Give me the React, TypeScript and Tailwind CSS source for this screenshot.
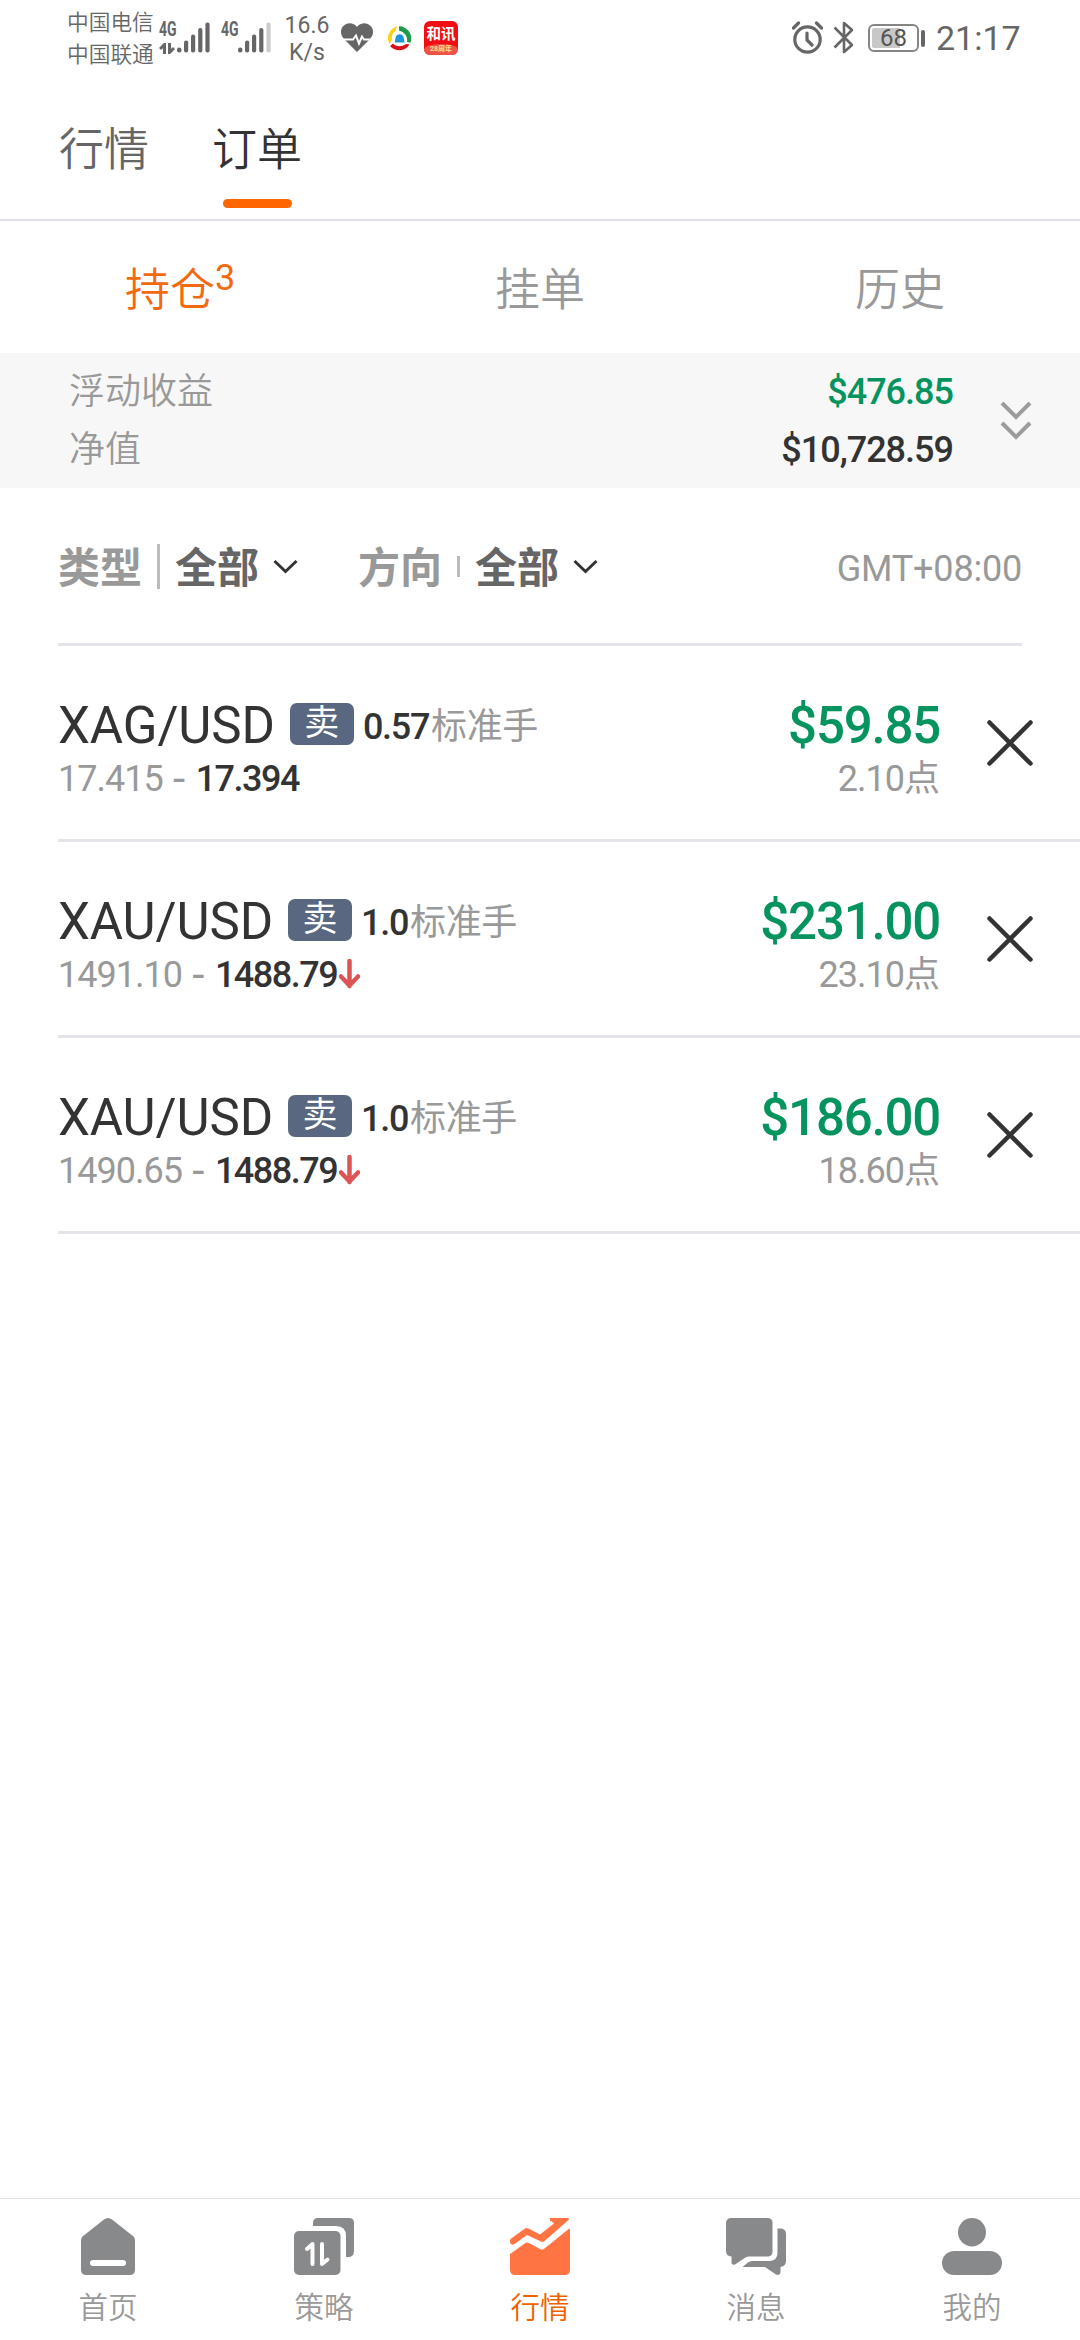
import React from "react";
import clsx from "clsx";

type Order = {
  id: number;
  symbol: string;
  lots: string;
  open: string;
  current: string;
  falling: boolean;
  profit: string;
  points: string;
};

const orders: Order[] = [
  { id: 1, symbol: "XAG/USD", lots: "0.57", open: "17.415", current: "17.394", falling: false, profit: "$59.85", points: "2.10" },
  { id: 2, symbol: "XAU/USD", lots: "1.0", open: "1491.10", current: "1488.79", falling: true, profit: "$231.00", points: "23.10" },
  { id: 3, symbol: "XAU/USD", lots: "1.0", open: "1490.65", current: "1488.79", falling: true, profit: "$186.00", points: "18.60" },
];

const Signal = ({ weak = false }: { weak?: boolean }) => (
  <svg width="33" height="32" viewBox="0 0 33 32" fill="#666">
    <rect x="0" y="26.5" width="4.4" height="5" rx="2" />
    <rect x="7" y="19.5" width="4.2" height="12" rx="2" />
    <rect x="14" y="13.5" width="4.2" height="18" rx="2" />
    <rect x="21.2" y="7" width="4.2" height="24.5" rx="2" />
    <rect x="28.4" y="1.5" width="4.2" height="30" rx="2" fill={weak ? "#ccc" : "#666"} />
  </svg>
);

const StatusBar = () => (
  <div className="flex h-[76px] shrink-0 items-start pl-[67px] pr-[60px] text-[#666]">
    <div className="mt-[7px] w-[88px] text-[21.7px] leading-[32px] font-[350] whitespace-nowrap">
      <div>中国电信</div>
      <div>中国联通</div>
    </div>
    <div className="mt-[20px] ml-[4px] flex h-[34px] w-[18px] flex-col justify-between">
      <span className="origin-left scale-x-70 text-[20px] leading-[19px] font-bold">4G</span>
      <svg width="16" height="11" viewBox="0 0 16 11" fill="none" stroke="#666" strokeWidth="3">
        <path d="M5.500 11V1.500L1 6M10.500 0v9.500L15 5" />
      </svg>
    </div>
    <div className="mt-[21px]">
      <Signal />
    </div>
    <span className="mt-[20px] ml-[11px] w-[17px] origin-left scale-x-70 text-[20px] leading-[19px] font-bold">4G</span>
    <div className="mt-[21px]">
      <Signal weak />
    </div>
    <div className="mt-[12px] ml-[13px] w-[46px] text-center text-[23px] leading-[27px]">
      <div>16.6</div>
      <div>K/s</div>
    </div>
    <svg className="mt-[23px] ml-[11px]" width="32" height="29" viewBox="0 0 32 29">
      <path d="M16 29 3 16C-1.500 11-.5 5 3 2.500c4-3.500 10-2.500 13 1.500 3-4 9-5 13-1.500 3.500 2.500 4.500 8.500 0 13.500z" fill="#666" />
      <path d="M2 16.500h10l3-4 3 8 3-7 2 3h7" fill="none" stroke="#fff" strokeWidth="2" />
    </svg>
    <svg className="mt-[26px] ml-[14px]" width="25" height="25" viewBox="0 0 25 25" fill="none">
      <path d="M2.500 18A12 12 0 0 1 10 .5L8.500 5A9 9 0 0 0 5 14z" fill="#fcd116" />
      <path d="M12 .3a12.200 12.200 0 0 1 11.500 16.500L20 16A10 10 0 0 0 12 4.500z" fill="#1f9a4a" />
      <path d="M22.500 18.500A12 12 0 0 1 3 20l3-2.500c3 3.500 9 3.500 13 .5z" fill="#d9131e" />
      <path d="M7.500 16.500c1-1 .3-2.500 1-4.500.8-5 7.500-5 8.300 0 .5 2 .2 3.500 1.200 4.500z" fill="#1b96d8" />
    </svg>
    <div className="mt-[21px] ml-[12px] flex h-[34px] w-[34px] flex-col items-center overflow-hidden rounded-[6px] bg-[#f20d12] text-white">
      <span className="mt-[6px] text-[14.500px] leading-[16px] font-bold">和讯</span>
      <span className="mt-[1px] h-[11px] w-full rounded-t-[50%] bg-[#ee5347] text-center text-[7px] leading-[11px] font-bold text-[#ffe28a]">
        28周年
      </span>
    </div>
    <div className="mt-[21px] ml-auto flex h-[34px] items-center">
      <svg className="mb-[2px]" width="31" height="33" viewBox="0 0 31 33" fill="none" stroke="#666">
        <circle cx="15.500" cy="18.500" r="12.700" strokeWidth="3.200" />
        <path d="M1.500 7 6.500 2M29.500 7l-5-5M15 12v7l5 5" strokeWidth="3.200" strokeLinecap="round" />
      </svg>
      <svg className="mb-[2px] ml-[10px]" width="21" height="33" viewBox="0 0 21 33" fill="none" stroke="#666" strokeWidth="2.600">
        <path d="M1.500 6.500 19 24l-8 7V2l8 7L1.500 26.500" strokeLinejoin="round" />
      </svg>
      <div className="ml-[14px] flex h-[28px] w-[51px] items-center justify-center rounded-[6px] border-2 border-[#858585] bg-[linear-gradient(90deg,#c8c8c8_66%,#fff_66%)] bg-origin-content p-[2px] [background-clip:content-box]">
        <span className="text-[24px] leading-[24px] text-[#555]">68</span>
      </div>
      <div className="ml-[2px] h-[17px] w-[4px] rounded-[2px] bg-[#666]" />
      <span className="ml-[11px] w-[84px] text-[34px] leading-[34px]">21:17</span>
    </div>
  </div>
);

const Caret = () => (
  <svg className="mb-[4px] ml-[14px]" width="25" height="15" viewBox="0 0 25 15" fill="none" stroke="#333" strokeWidth="3">
    <path d="m1.500 2 11 10.500L23.500 2" />
  </svg>
);

const OrderRow = ({ order }: { order: Order }) => (
  <div className="ml-[58px] flex h-[196px] border-b-3 border-[#e4e5ea]">
    <div className="flex-1 pt-[52px]">
      <div className="flex h-[56px] items-center whitespace-nowrap">
        <span className="text-[51px] leading-[56px] tracking-[-0.1px] text-[#333]">{order.symbol}</span>
        <span className="mb-[4px] ml-[15px] flex h-[42px] w-[64px] items-center justify-center rounded-[7px] bg-[#596880] text-[35px] leading-[42px] text-white">
          卖
        </span>
        <span className="mt-[2px] ml-[9px] text-[36px] leading-[42px] font-medium tracking-[-1.3px] text-[#333]">{order.lots}</span>
        <span className="mt-[2px] ml-[2px] text-[36px] leading-[42px] tracking-[-0.4px] text-[#999]">标准手</span>
      </div>
      <div className="flex h-[50px] items-center text-[36px] leading-[50px]">
        <span className="tracking-[-1px] text-[#999]">{order.open}</span>
        <span className="w-[33px] text-center text-[44px] text-[#999]">-</span>
        <span className="font-medium tracking-[-1.5px] text-[#333]">{order.current}</span>
        {order.falling && (
          <svg className="mb-[2px] ml-[2px]" width="21" height="31" viewBox="0 0 21 31" fill="none" stroke="#dc5555" strokeWidth="4.500">
            <path d="M10.500 2v25M2 17.500l8.500 9 8.500-9" strokeLinecap="round" />
          </svg>
        )}
      </div>
    </div>
    <div className="pt-[52px] text-right">
      <div className="h-[56px] text-[51px] leading-[56px] font-medium tracking-[-1.2px] text-[#05935e]">{order.profit}</div>
      <div className="flex h-[50px] items-center justify-end text-[36px] leading-[50px] text-[#999]">
        <span className="tracking-[-1px]">{order.points}</span>点
      </div>
    </div>
    <button className="mt-[74px] mr-[47px] ml-[47px] h-[46px] w-[46px]">
      <svg width="46" height="46" viewBox="0 0 46 46" stroke="#333" strokeWidth="4.500" strokeLinecap="round">
        <path d="m2.500 2.500 41 41M43.500 2.500l-41 41" />
      </svg>
    </button>
  </div>
);

const navItems = [
  {
    label: "首页",
    icon: (
      <>
        <path d="M26 1.500Q30-1.500 34 1.500L55.500 18.500Q57 20 57 22V51.500Q57 57 51.500 57H8.500Q3 57 3 51.500V22Q3 20 4.500 18.500Z" />
        <rect x="12" y="42" width="36" height="6" rx="3" fill="#fff" />
      </>
    ),
  },
  {
    label: "策略",
    icon: (
      <>
        <rect x="0" y="13" width="46.500" height="44" rx="5" />
        <path d="M19 8V5Q19 0 24 0H55Q60 0 60 5V33Q60 39 54 39H52V18Q52 8 42 8Z" />
        <path d="M18.500 46V26L13 31M28 26V46L33.500 41.500" fill="none" stroke="#fff" strokeWidth="4" strokeLinecap="round" strokeLinejoin="round" />
      </>
    ),
  },
  {
    label: "行情",
    active: true,
    icon: (
      <>
        <path d="M0 36 15.500 25Q17 24 19 25L31 31.500Q33 32 34.500 30.500L58 11.500Q60 10 60 12V51.500Q60 57 54.500 57H5.500Q0 57 0 51.500Z" />
        <path d="M.5 21 15 10.500Q16.500 9.500 18.500 10.500L30 16.500 44 5.500Q43 4 40 2.500V0H58.500Q59.500 1 58 2.500L34.500 23Q33 24.500 31 23.500L17 17 4.500 26Q2 27.500.5 25.500-.5 23 .5 21Z" />
      </>
    ),
  },
  {
    label: "消息",
    icon: (
      <>
        <path d="M5.500 0H41.500Q46.500 0 46.500 5V33.500Q46.500 38.500 41.500 38.500H23Q21 38.500 19.500 39.500L9 46.500Q5.500 47.500 5.500 44V38.500Q0 38 0 33V5.500Q0 0 5.500 0Z" />
        <path d="M51.500 10.500H54Q60 10.500 60 16V43Q60 48 54.500 49V54.500Q54 58 50 56.500L39 49H16.500L22 44.500Q24 43 26 43H44Q51.500 42 51.500 35Z" />
      </>
    ),
  },
  {
    label: "我的",
    icon: (
      <>
        <ellipse cx="30" cy="14.200" rx="14" ry="14.200" />
        <rect x="0" y="33" width="60" height="24" rx="12" />
      </>
    ),
  },
];

const App = () => {
  return (
    <div className="flex h-[2340px] w-[1080px] flex-col overflow-hidden bg-white font-[Roboto,'Noto_Sans_CJK_SC',sans-serif]">
      <StatusBar />

      {/* top tabs */}
      <div className="flex h-[145px] shrink-0 border-b-2 border-[#dddee5] pl-[59px] text-[45px] leading-[60px] font-[350]">
        <div className="w-[90px] pt-[45px] text-[#666]">行情</div>
        <div className="ml-[63px] flex w-[90px] flex-col items-center pt-[45px] text-[#333]">
          <span>订单</span>
          <div className="mt-[18px] h-[9px] w-[69px] rounded-full bg-[#ff6600]" />
        </div>
      </div>

      {/* order status tabs */}
      <div className="grid h-[132px] shrink-0 grid-cols-3 text-center text-[45px] leading-[140px] font-[350] text-[#999]">
        <div className="flex justify-center text-[#f26a10]">
          <span>持仓</span>
          <span className="-mt-[13px] text-[36px] font-normal">3</span>
        </div>
        <div>挂单</div>
        <div>历史</div>
      </div>

      {/* account summary */}
      <div className="flex h-[135px] shrink-0 items-center bg-[#f7f7f7] pr-[48px] pl-[69px] text-[36px] leading-[58px]">
        <div className="flex-1 font-[350] text-[#999]">
          <div>浮动收益</div>
          <div>净值</div>
        </div>
        <div className="pt-[1px] text-right font-medium tracking-[-1px] text-[#333]">
          <div className="text-[#05935e]">$476.85</div>
          <div>$10,728.59</div>
        </div>
        <svg className="ml-[47px]" width="32" height="40" viewBox="0 0 32 40" fill="none" stroke="#9c9c9c" strokeWidth="4">
          <path d="m2 2 14 14L30 2M2 22l14 14 14-14" />
        </svg>
      </div>

      {/* filters */}
      <div className="mx-[58px] flex h-[158px] shrink-0 items-center border-b-3 border-[#e4e5ea] pt-[6px] text-[42px] leading-[60px] font-bold text-[#666]">
        <span className="text-[#999]">类型</span>
        <div className="mb-[5px] ml-[15px] h-[45px] w-[3px] bg-[#bbb]" />
        <span className="ml-[15px]">全部</span>
        <Caret />
        <span className="ml-[60px] text-[#999]">方向</span>
        <div className="mb-[5px] ml-[15px] h-[21px] w-[3px] bg-[#bbb]" />
        <span className="ml-[15px]">全部</span>
        <Caret />
        <span className="ml-auto text-[36px] font-normal tracking-[-0.2px] text-[#999]">GMT+08:00</span>
      </div>

      {orders.map((order) => (
        <OrderRow key={order.id} order={order} />
      ))}

      {/* bottom navigation */}
      <div className="mt-auto grid h-[142px] shrink-0 grid-cols-5 border-t border-[#e2e2e2]">
        {navItems.map((item) => (
          <div key={item.label} className="flex flex-col items-center pt-[19px]">
            <svg
              width="60"
              height="57"
              viewBox="0 0 60 57"
              className={clsx(item.active ? "fill-[#ff7442]" : "fill-[#88898b]")}
            >
              {item.icon}
            </svg>
            <span
              className={clsx(
                "mt-[13px] text-[29.500px] leading-[40px] font-[350]",
                item.active ? "text-[#f06000]" : "text-[#999]"
              )}
            >
              {item.label}
            </span>
          </div>
        ))}
      </div>
    </div>
  );
};

export default App;
